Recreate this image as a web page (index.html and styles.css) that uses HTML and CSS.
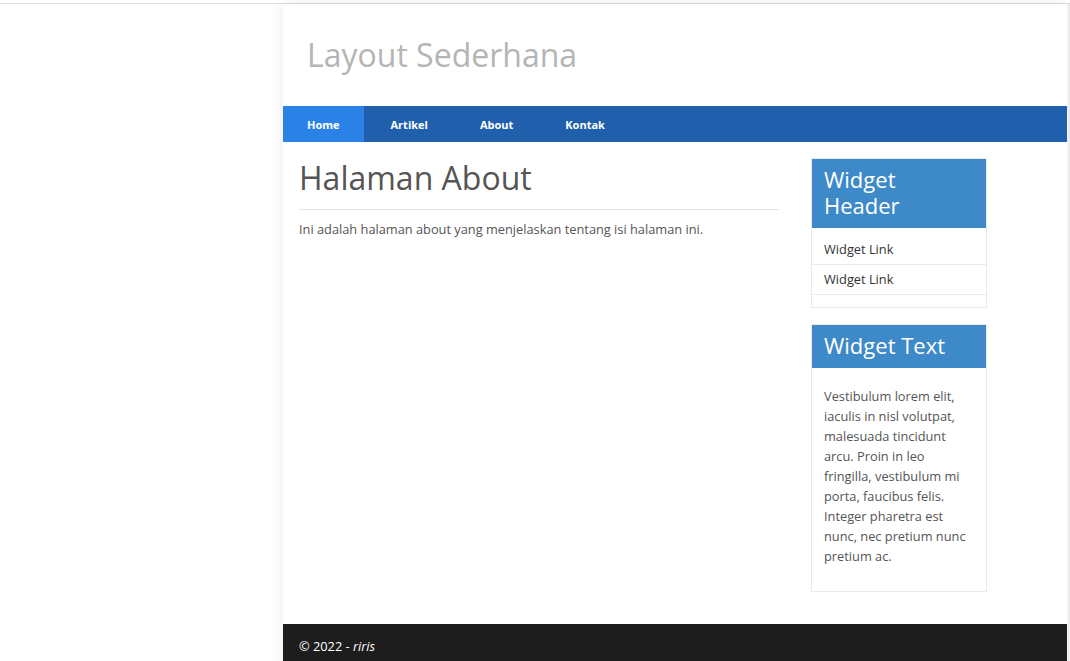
FILE: index.html
```html
<!DOCTYPE html>
<html lang="id">
<head>
<meta charset="utf-8">
<title>Layout Sederhana</title>
<link rel="stylesheet" href="styles.css">
</head>
<body>
<div class="page">
  <div class="spacer"></div>
  <div class="container">
    <header class="site-header">
      <h1 class="site-title">Layout Sederhana</h1>
    </header>
    <nav class="nav">
      <a class="nav-item active" href="#">Home</a>
      <a class="nav-item" href="#">Artikel</a>
      <a class="nav-item" href="#">About</a>
      <a class="nav-item" href="#">Kontak</a>
    </nav>
    <div class="body">
      <main class="main">
        <h2 class="page-title">Halaman About</h2>
        <hr class="divider">
        <p class="lead">Ini adalah halaman about yang menjelaskan tentang isi halaman ini.</p>
      </main>
      <aside class="sidebar">
        <div class="widget">
          <h3 class="widget-header">Widget Header</h3>
          <ul class="widget-list">
            <li class="widget-link">Widget Link</li>
            <li class="widget-link">Widget Link</li>
          </ul>
        </div>
        <div class="widget">
          <h3 class="widget-header">Widget Text</h3>
          <div class="widget-body">
            <p class="widget-text">Vestibulum lorem elit, iaculis in nisl volutpat, malesuada tincidunt arcu. Proin in leo fringilla, vestibulum mi porta, faucibus felis. Integer pharetra est nunc, nec pretium nunc pretium ac.</p>
          </div>
        </div>
      </aside>
    </div>
    <footer class="footer">© 2022 - <em>riris</em></footer>
  </div>
  <div class="edge"></div>
</div>
</body>
</html>
```

FILE: styles.css
```css
* { box-sizing: border-box; }
html, body { margin: 0; padding: 0; background: #fff; }
body {
  padding-top: 3px;
  font-family: "Open Sans", "Noto Sans", sans-serif;
  color: #555;
  font-size: 12.8px;
}
.page {
  display: flex;
  border-top: 1px solid #dedede;
  min-height: 660px;
}
.spacer { width: 283px; flex: none; }
.edge { flex: 1; background: #ececec; border-left: 1px solid #f5f5f5; }
.container {
  width: 784px;
  flex: none;
  background: #fff;
  box-shadow: 0 0 12px rgba(0,0,0,0.09);
  display: flex;
  flex-direction: column;
}
.site-header {
  height: 102px;
  padding: 0 24px;
  display: flex;
  align-items: center;
}
.site-title {
  margin: 0;
  margin-bottom: 2px;
  font-weight: 400;
  font-size: 32px;
  color: #b5b5b5;
}
.nav {
  display: flex;
  background: #1f5fab;
  height: 36px;
}
.nav-item {
  display: flex;
  align-items: center;
  padding: 0 24px;
  color: #fff;
  font-weight: 700;
  font-size: 11px;
  text-decoration: none;
}
.nav-item + .nav-item { padding-left: 27px; padding-right: 25px; }
.nav-item.active { background: #2b82e6; }
.body {
  display: flex;
  padding: 0 16px 32px;
}
.main {
  width: 480px;
  flex: none;
  padding-top: 14px;
}
.page-title {
  margin: 0;
  font-weight: 400;
  font-size: 32px;
  line-height: 44px;
  color: #555;
}
.divider {
  border: 0;
  border-top: 1px solid #e3e3e3;
  margin: 9px 0 9px;
}
.lead { margin: 0; line-height: 20px; }
.sidebar {
  width: 176px;
  flex: none;
  margin-left: 32px;
  padding-top: 16px;
  display: flex;
  flex-direction: column;
  gap: 16px;
}
.widget { border: 1px solid #eaeaea; }
.widget-header {
  margin: 0;
  background: #3e8ac9;
  color: #fff;
  font-weight: 400;
  font-size: 22px;
  line-height: 26px;
  padding: 7px 12px 10px;
}
.widget-list {
  list-style: none;
  margin: 0;
  padding: 7px 0 12px;
}
.widget-link {
  padding: 4px 12px;
  line-height: 21px;
  border-bottom: 1px solid #eaeaea;
  color: #333;
}
.widget-body { padding: 18px 12px 25px; }
.widget-text { margin: 0; line-height: 20px; }
.footer {
  background: #1d1d1d;
  color: #fff;
  padding: 12px 16px;
  line-height: 20px;
  flex: 1;
}
.footer em { font-style: italic; }
```
